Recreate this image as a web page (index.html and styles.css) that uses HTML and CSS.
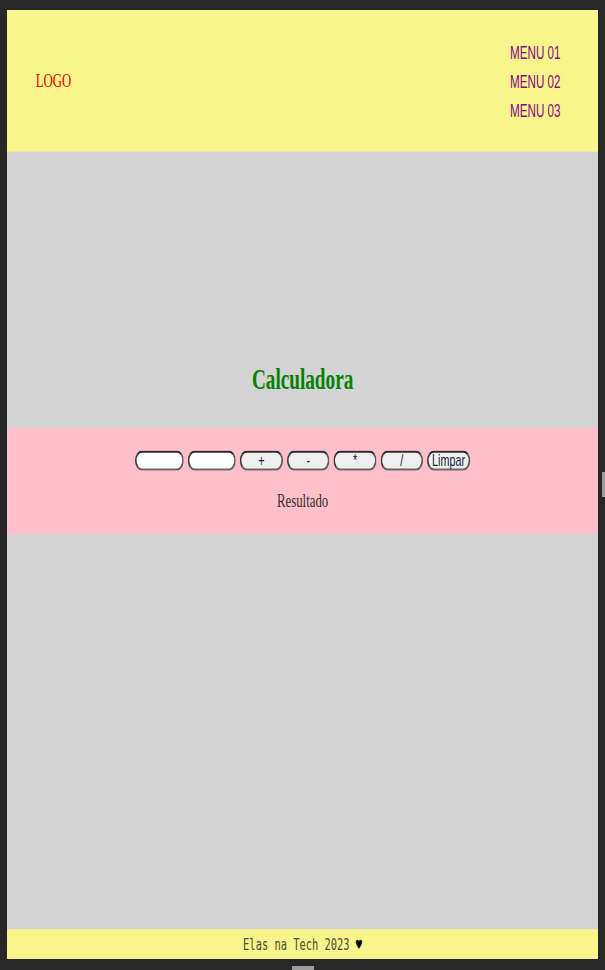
FILE: index.html
```html
<!DOCTYPE html>
<html lang="pt-BR">
<head>
<meta charset="utf-8">
<title>Calculadora</title>
<link rel="stylesheet" href="styles.css">
</head>
<body>
<div class="frame">
  <div class="page">
    <header class="header">
      <div class="logo">LOGO</div>
      <ul class="menu">
        <li>MENU 01</li>
        <li>MENU 02</li>
        <li>MENU 03</li>
      </ul>
    </header>
    <section class="hero">
      <h2 class="title">Calculadora</h2>
    </section>
    <section class="calc">
      <div class="row">
        <input class="num" type="text">
        <input class="num" type="text">
        <button class="op">+</button>
        <button class="op">-</button>
        <button class="op">*</button>
        <button class="op">/</button>
        <button class="op">Limpar</button>
      </div>
      <p class="result">Resultado</p>
    </section>
    <section class="filler"></section>
    <footer class="footer">Elas na Tech 2023 <span class="heart">♥</span></footer>
  </div>
</div>
<div class="handle-bottom"></div>
<div class="handle-right"></div>
</body>
</html>
```
FILE: styles.css
```css
html, body {
  margin: 0;
  padding: 0;
  overflow: hidden;
}
body {
  background: #272727;
  padding: 10px 7px 0;
  width: 591px;
  height: 960px;
  display: flex;
  flex-direction: column;
  align-items: center;
}
.frame {
  width: 591px;
  height: 949px;
  overflow: hidden;
  flex: none;
}
.page {
  width: 739px;
  height: 791px;
  transform: scale(0.8, 1.2);
  transform-origin: 0 0;
  display: flex;
  flex-direction: column;
  background: #d4d4d4;
  font-family: "Liberation Serif", "Times New Roman", serif;
  font-size: 16px;
}
.header {
  height: 118.3px;
  flex: none;
  background: #f7f58b;
  display: flex;
  align-items: center;
  justify-content: space-between;
  padding: 0 47px 0 36px;
}
.logo {
  color: #e00000;
  font-size: 16px;
}
.menu {
  list-style: none;
  margin: 1.6px 0 0;
  padding: 0;
}
.menu li {
  font-family: "Liberation Sans", Arial, sans-serif;
  font-size: 14.6px;
  line-height: 24.2px;
  color: #850a85;
}
.hero {
  height: 230px;
  flex: none;
  display: flex;
  flex-direction: column;
  justify-content: flex-end;
  align-items: center;
  padding-bottom: 26px;
  box-sizing: border-box;
}
.title {
  margin: 0;
  font-size: 24px;
  font-weight: bold;
  color: #008000;
}
.calc {
  flex: none;
  background: #ffc0cb;
  padding: 18.3px 0 19.3px;
  display: flex;
  flex-direction: column;
  align-items: center;
}
.row {
  display: flex;
  gap: 5px;
  height: 17.4px;
}
.num, .op {
  box-sizing: border-box;
  height: 17.4px;
  margin: 0;
  padding: 0;
  border: 2px solid #333;
  border-color: #2a2a2a #555 #666 #3a3a3a;
  border-radius: 10px;
  font-family: "Liberation Sans", Arial, sans-serif;
  font-size: 13.5px;
  line-height: 13px;
}
.num {
  width: 60.5px;
  background: #ffffff;
}
.op {
  width: 53.5px;
  background: #efefef;
  color: #1c1c3a;
  text-align: center;
}
.result {
  margin: 16px 0 0;
  font-size: 16px;
  color: #3a2a2a;
}
.filler {
  flex: 1;
}
.footer {
  flex: none;
  height: 25px;
  line-height: 25px;
  background: #f7f58b;
  text-align: center;
  font-family: "DejaVu Sans Mono", monospace;
  font-size: 13px;
  color: #4f4b30;
}
.heart {
  color: #000;
}
.handle-bottom {
  width: 22px;
  height: 4px;
  margin-top: 7px;
  background: #9c9c9c;
  flex: none;
}
.handle-right {
  position: absolute;
  right: 0;
  top: 472px;
  width: 3px;
  height: 25px;
  background: #9c9c9c;
}
```
